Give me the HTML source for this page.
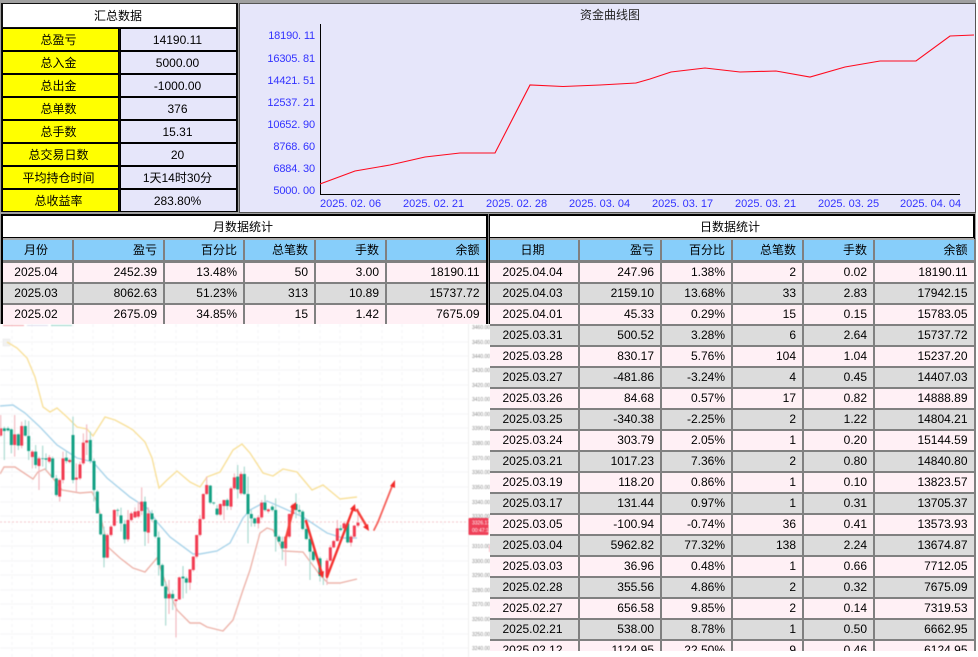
<!DOCTYPE html>
<html lang="zh">
<head>
<meta charset="utf-8">
<title>汇总数据</title>
<style>
html,body{margin:0;padding:0;width:978px;height:657px;overflow:hidden;background:#fff;}
body{font-family:"Liberation Sans","Noto Sans CJK SC",sans-serif;font-size:12px;color:#000;position:relative;}
.a{position:absolute;}
.bgc{left:0;top:0;width:976px;height:651px;background:#a0a0a0;}
.sumbox{left:1px;top:3px;width:237px;height:209px;background:#111;}
.title{position:absolute;background:#fff;text-align:center;box-sizing:border-box;padding-right:3px;}
.y,.v{position:absolute;height:21px;line-height:22px;text-align:center;box-sizing:border-box;}
.y{left:3px;width:115px;background:#ffff00;box-shadow:0 0 0 1px #000;padding-right:4px;}
.v{left:121px;width:115px;background:#e6e6fa;box-shadow:0 0 0 1px #000;padding-right:2px;}
.chart{left:239px;top:3px;width:737px;height:210px;background:#555;}
.chart i{position:absolute;left:1px;top:1px;width:735px;height:208px;background:#e6e6fa;}
.yl{position:absolute;left:250px;width:65px;text-align:right;color:#3232ff;font-size:11px;line-height:14px;height:14px;letter-spacing:-.15px;}
.xl{position:absolute;top:197px;color:#3232ff;font-size:11px;line-height:14px;white-space:nowrap;}
table{position:absolute;border-collapse:separate;border-spacing:2px;table-layout:fixed;background:#808080;}
td,th{padding:0 6px 0 0;height:19px;line-height:19px;font-weight:normal;text-align:right;white-space:nowrap;overflow:hidden;box-sizing:border-box;}
th{background:#87cefa;height:21px;line-height:20px;border-bottom:1px solid #808080;}
td:first-child,th:first-child{text-align:center;padding:0 3px 0 0;}
td:last-child,th:last-child{padding-right:6.5px;}
tr.p td{background:#fff0f5;}
tr.g td{background:#dcdcdc;}
.bk{background:#000;position:absolute;}
</style>
</head>
<body>
<div class="a bgc"></div>

<!-- Summary -->
<div class="a sumbox"></div>
<div class="title" style="left:3px;top:4px;width:233px;height:23px;line-height:24px;">汇总数据</div>
<div class="y" style="top:28.5px">总盈亏</div><div class="v" style="top:28.5px">14190.11</div>
<div class="y" style="top:51.5px">总入金</div><div class="v" style="top:51.5px">5000.00</div>
<div class="y" style="top:74.5px">总出金</div><div class="v" style="top:74.5px">-1000.00</div>
<div class="y" style="top:97.5px">总单数</div><div class="v" style="top:97.5px">376</div>
<div class="y" style="top:120.5px">总手数</div><div class="v" style="top:120.5px">15.31</div>
<div class="y" style="top:143.5px">总交易日数</div><div class="v" style="top:143.5px">20</div>
<div class="y" style="top:166.5px">平均持仓时间</div><div class="v" style="top:166.5px">1天14时30分</div>
<div class="y" style="top:189.5px">总收益率</div><div class="v" style="top:189.5px">283.80%</div>

<!-- Equity chart -->
<div class="a chart"><i></i></div>
<div class="a" style="left:580px;top:8px;width:60px;text-align:center;line-height:15px;white-space:nowrap;color:#222;">资金曲线图</div>
<div class="yl" style="top:29px">18190. 11</div>
<div class="yl" style="top:52px">16305. 81</div>
<div class="yl" style="top:74px">14421. 51</div>
<div class="yl" style="top:96px">12537. 21</div>
<div class="yl" style="top:118px">10652. 90</div>
<div class="yl" style="top:140px">8768. 60</div>
<div class="yl" style="top:162px">6884. 30</div>
<div class="yl" style="top:184px">5000. 00</div>
<div class="xl" style="left:320px">2025. 02. 06</div>
<div class="xl" style="left:403px">2025. 02. 21</div>
<div class="xl" style="left:486px">2025. 02. 28</div>
<div class="xl" style="left:569px">2025. 03. 04</div>
<div class="xl" style="left:652px">2025. 03. 17</div>
<div class="xl" style="left:735px">2025. 03. 21</div>
<div class="xl" style="left:818px">2025. 03. 25</div>
<div class="xl" style="left:900px">2025. 04. 04</div>
<svg class="a" style="left:0;top:0" width="978" height="213" viewBox="0 0 978 213">
<path d="M320.5 24V194.5H960" fill="none" stroke="#000" stroke-width="1"/>
<polyline fill="none" stroke="#ff0a1e" stroke-width="1.1" points="320,184 355,171 390,165 425,157 460,153 495,153 530,85 563,86.5 600,85 636,83 650,79 671,72 705,68 740,72 776,71 810,77 845,67 880,61 916,61 950,36 974,35"/>
</svg>

<!-- Month table -->
<table style="left:1px;top:238px;width:487px;">
<colgroup><col style="width:69px"><col style="width:89px"><col style="width:78px"><col style="width:69px"><col style="width:69px"><col style="width:99px"></colgroup>
<tr><th>月份</th><th>盈亏</th><th>百分比</th><th>总笔数</th><th>手数</th><th>余额</th></tr>
<tr class="p"><td>2025.04</td><td>2452.39</td><td>13.48%</td><td>50</td><td>3.00</td><td>18190.11</td></tr>
<tr class="g"><td>2025.03</td><td>8062.63</td><td>51.23%</td><td>313</td><td>10.89</td><td>15737.72</td></tr>
<tr class="p"><td>2025.02</td><td>2675.09</td><td>34.85%</td><td>15</td><td>1.42</td><td>7675.09</td></tr>
</table>

<!-- Day table -->
<div class="a" style="left:488px;top:238px;width:488px;height:413px;overflow:hidden;">
<table style="left:0;top:0;width:488px;">
<colgroup><col style="width:88px"><col style="width:80px"><col style="width:69px"><col style="width:69px"><col style="width:69px"><col style="width:99px"></colgroup>
<tr><th>日期</th><th>盈亏</th><th>百分比</th><th>总笔数</th><th>手数</th><th>余额</th></tr>
<tr class="p"><td>2025.04.04</td><td>247.96</td><td>1.38%</td><td>2</td><td>0.02</td><td>18190.11</td></tr>
<tr class="g"><td>2025.04.03</td><td>2159.10</td><td>13.68%</td><td>33</td><td>2.83</td><td>17942.15</td></tr>
<tr class="p"><td>2025.04.01</td><td>45.33</td><td>0.29%</td><td>15</td><td>0.15</td><td>15783.05</td></tr>
<tr class="g"><td>2025.03.31</td><td>500.52</td><td>3.28%</td><td>6</td><td>2.64</td><td>15737.72</td></tr>
<tr class="p"><td>2025.03.28</td><td>830.17</td><td>5.76%</td><td>104</td><td>1.04</td><td>15237.20</td></tr>
<tr class="g"><td>2025.03.27</td><td>-481.86</td><td>-3.24%</td><td>4</td><td>0.45</td><td>14407.03</td></tr>
<tr class="p"><td>2025.03.26</td><td>84.68</td><td>0.57%</td><td>17</td><td>0.82</td><td>14888.89</td></tr>
<tr class="g"><td>2025.03.25</td><td>-340.38</td><td>-2.25%</td><td>2</td><td>1.22</td><td>14804.21</td></tr>
<tr class="p"><td>2025.03.24</td><td>303.79</td><td>2.05%</td><td>1</td><td>0.20</td><td>15144.59</td></tr>
<tr class="g"><td>2025.03.21</td><td>1017.23</td><td>7.36%</td><td>2</td><td>0.80</td><td>14840.80</td></tr>
<tr class="p"><td>2025.03.19</td><td>118.20</td><td>0.86%</td><td>1</td><td>0.10</td><td>13823.57</td></tr>
<tr class="g"><td>2025.03.17</td><td>131.44</td><td>0.97%</td><td>1</td><td>0.31</td><td>13705.37</td></tr>
<tr class="p"><td>2025.03.05</td><td>-100.94</td><td>-0.74%</td><td>36</td><td>0.41</td><td>13573.93</td></tr>
<tr class="g"><td>2025.03.04</td><td>5962.82</td><td>77.32%</td><td>138</td><td>2.24</td><td>13674.87</td></tr>
<tr class="p"><td>2025.03.03</td><td>36.96</td><td>0.48%</td><td>1</td><td>0.66</td><td>7712.05</td></tr>
<tr class="g"><td>2025.02.28</td><td>355.56</td><td>4.86%</td><td>2</td><td>0.32</td><td>7675.09</td></tr>
<tr class="p"><td>2025.02.27</td><td>656.58</td><td>9.85%</td><td>2</td><td>0.14</td><td>7319.53</td></tr>
<tr class="g"><td>2025.02.21</td><td>538.00</td><td>8.78%</td><td>1</td><td>0.50</td><td>6662.95</td></tr>
<tr class="p"><td>2025.02.12</td><td>1124.95</td><td>22.50%</td><td>9</td><td>0.46</td><td>6124.95</td></tr>
</table>
</div>

<!-- Black frame for tables (painted above the tables) -->
<div class="bk" style="left:1px;top:213.5px;width:973.5px;height:25px;"></div>
<div class="bk" style="left:1px;top:213.5px;width:2px;height:120px;"></div>
<div class="bk" style="left:486px;top:213.5px;width:4px;height:120px;"></div>
<div class="a" style="left:488px;top:214px;width:1px;height:120px;background:#888;"></div>
<div class="title" style="left:3px;top:216px;width:483px;height:21px;line-height:23px;">月数据统计</div>
<div class="title" style="left:490px;top:216px;width:483px;height:21px;line-height:23px;">日数据统计</div>
<div class="a" style="left:3px;top:238px;width:483px;height:2px;background:#aaa;"></div>
<div class="a" style="left:490px;top:238px;width:484px;height:2px;background:#aaa;"></div>

<!-- Trading chart overlay -->
<div class="a" style="left:0;top:324px;width:490px;height:333px;background:#fff;overflow:hidden;">
<svg width="490" height="333" viewBox="0 324 490 333" style="display:block;filter:blur(.5px)">
<g fill="none" stroke="#f6f6f7" stroke-width="1">
<path d="M0 342H468M0 356H468M0 370H468M0 385H468M0 399H468M0 414H468M0 428H468M0 443H468M0 458H468M0 472H468M0 487H468M0 502H468M0 516H468M0 531H468M0 546H468M0 561H468M0 575H468M0 590H468M0 604H468M0 619H468M0 634H468M0 648H468"/>
<path stroke-dasharray="3 3" d="M12 324V657M32 324V657M52 324V657M73 324V657M93 324V657M113 324V657M135 324V657M155 324V657M176 324V657M197 324V657M217 324V657M237 324V657M258 324V657M279 324V657M299 324V657M320 324V657M340 324V657M361 324V657M382 324V657M402 324V657M423 324V657M443 324V657"/>
</g>
<path d="M468.5 324V657" stroke="#eeeeee" stroke-width="1"/>
<path d="M3 325.5H24" stroke="#f3a6ae" stroke-width="1"/><path d="M27 325.5H48" stroke="#dcdcec" stroke-width="1"/><path d="M51 325.5H72" stroke="#9ad6cb" stroke-width="1"/>
<rect x="3" y="339" width="7" height="7" fill="#f1f1f1" stroke="#e8e8e8" stroke-width=".5"/>
<path d="M0 522H468" stroke="#f2b6bb" stroke-width=".8" stroke-dasharray="2 2"/>
<polyline fill="none" stroke="#f8e09a" stroke-width="1.4" points="7,342 17,348 27,358 35,377 43,407 50,412 57,408 67,417 77,427 87,429 93,436 105,417 115,420 128,427 133,430 145,442 152,458 159,488 167,480 177,471 190,482 200,487 207,477 220,472 233,450 242,444 250,453 263,473 273,476 283,469 297,472 312,490 323,485 340,499 357,497"/>
<polyline fill="none" stroke="#aad4ea" stroke-width="1.4" points="0,406 13,405 25,413 40,427 57,445 77,458 93,462 107,478 130,497 147,508 157,522 170,537 193,554 200,554 217,551 230,543 243,518 250,510 267,501 283,508 303,517 327,533 343,538 357,538"/>
<polyline fill="none" stroke="#edb4ab" stroke-width="1.4" points="0,474 4,467 15,467 33,479 38,472 45,469 52,477 62,490 80,493 92,492 97,502 108,547 120,558 133,568 145,572 157,558 167,587 177,610 190,623 200,623 207,627 223,631 233,620 243,590 250,570 260,533 267,528 273,530 283,551 303,552 320,575 328,583 340,583 357,579"/>

<g transform="translate(0,395) scale(.33333)" fill="none">
<path stroke="#a9d9d0" stroke-width="3.5" d="M13 95V195M24 95V110M34 100V175M55 115V165M76 75V125M86 78V195M107 150V220M128 152V215M138 175V225M158 185V250M169 240V305M199 170V205M219 65V265M271 110V205M282 190V320"/>
<path stroke="#f2b9c0" stroke-width="3.5" d="M2 60V125M44 60V185M65 80V160M97 165V220M117 185V285M148 180V205M179 250V320M189 170V265M209 190V205M229 205V290M240 200V255M250 115V210M260 88V180"/>
<path stroke="#12a083" stroke-width="9" d="M13 100V108M24 100V106M34 103V150M55 118V152M76 93V122M86 123V168M107 170V210M128 190V192M138 190V194M158 190V248M169 250V300M199 188V198M219 120V255M271 135V198M282 198V285"/>
<path stroke="#f23a50" stroke-width="9" d="M2 100V122M44 118V150M65 93V152M97 170V186M117 190V213M148 187V200M179 255V305M189 190V255M209 195V201M229 248V254M240 208V250M250 143V205M260 136V143"/>
</g>
<g transform="translate(0,430) scale(.33333)" fill="none">
<path stroke="#a9d9d0" stroke-width="3.5" d="M292 180V250M302 250V316M312 290V412M353 235V260M363 233V305M374 270V340M435 200V348M456 240V275M466 265V325M476 305V437M487 400V470M497 455V587M518 480V540M549 408V505M559 440V490M631 165V222M641 215V225M651 225V258M682 205V240M713 105V205M733 110V195M744 140V340"/>
<path stroke="#f2b9c0" stroke-width="3.5" d="M322 310V385M333 285V320M343 238V290M384 240V335M394 245V275M405 232V265M415 215V265M425 172V255M445 232V340M507 450V552M528 507V622M538 440V510M570 418V480M580 378V425M590 315V385M600 255V320M610 190V270M620 140V195M661 220V258M672 210V270M693 170V240M703 130V180M723 125V195"/>
<path stroke="#12a083" stroke-width="9" d="M292 185V250M302 252V313M312 313V383M353 240V242M363 256V280M374 282V328M435 215V305M456 250V268M466 270V320M476 322V405M487 405V468M497 470V505M518 492V505M549 440V445M559 445V458M631 167V218M641 218V220M651 236V254M682 210V228M713 140V178M733 132V192M744 192V252"/>
<path stroke="#f23a50" stroke-width="9" d="M322 315V383M333 290V315M343 240V287M384 270V328M394 250V270M405 245V262M415 243V260M425 215V243M445 250V308M507 492V505M528 508V513M538 442V508M570 418V458M580 380V420M590 315V380M600 267V315M610 192V267M620 165V192M661 222V254M672 210V228M693 175V230M703 142V175M723 132V190"/>
</g>
<g transform="translate(240,430) scale(.33333)" fill="none">
<path stroke="#a9d9d0" stroke-width="3.5" d="M34 240V290M44 262V290M75 195V245M97 225V245M107 205V365M117 315V340M127 320V390M168 190V265M178 225V255M188 240V300M199 280V330M210 320V450M220 360V395M240 380V455M250 430V465M302 285V305M323 270V340"/>
<path stroke="#f2b9c0" stroke-width="3.5" d="M55 255V295M65 210V268M85 235V250M137 315V408M148 250V325M158 220V258M261 385V465M271 345V395M281 330V355M292 270V335M312 275V300M333 315V350M343 285V325M354 235V292"/>
<path stroke="#12a083" stroke-width="9" d="M34 252V265M44 265V280M75 218V240M97 230V240M107 240V320M117 320V335M127 335V355M168 222V240M178 240V245M188 245V297M199 297V327M210 327V365M220 365V390M240 385V438M302 295V300M323 280V337"/>
<path stroke="#f23a50" stroke-width="9" d="M55 262V280M65 218V262M85 238V244M137 320V355M148 252V320M158 225V252M261 392V440M271 352V392M281 333V352M292 295V333M312 280V295M333 320V338M343 287V320M354 278V287"/>
</g>

<!-- drawn arrows -->
<g fill="none" stroke-linecap="round">
<path d="M285 542L294 506" stroke="#f7443f" stroke-width="2.4"/>
<path d="M306 521L322 574" stroke="#f5302e" stroke-width="2.4"/>
<path d="M327 577L353 509" stroke="#f5302e" stroke-width="2.4"/>
<path d="M357 510L367 527" stroke="#f5403c" stroke-width="2.4"/>
<path d="M374 530L378 522L393 484" stroke="#f5605a" stroke-width="1.8"/>
</g>
<g fill="#f22a2a">
<polygon points="296,502 296,510 290,507"/>
<polygon points="323,578 318,573 324,571"/>
<polygon points="355,504 356,512 350,509"/>
<polygon points="369,531 363,527 368,524"/>
<polygon points="395,480 395,488 390,486"/>
</g>

<!-- price axis -->
<g font-family="Liberation Sans, sans-serif" font-size="5" fill="#888" text-anchor="start">
<text x="472" y="329">3460.00</text><text x="472" y="344">3450.00</text><text x="472" y="358">3440.00</text><text x="472" y="372">3430.00</text><text x="472" y="387">3420.00</text><text x="472" y="401">3410.00</text><text x="472" y="416">3400.00</text><text x="472" y="430">3390.00</text><text x="472" y="445">3380.00</text><text x="472" y="460">3370.00</text><text x="472" y="474">3360.00</text><text x="472" y="489">3350.00</text><text x="472" y="504">3340.00</text><text x="472" y="518">3330.00</text><text x="472" y="548">3310.00</text><text x="472" y="563">3300.00</text><text x="472" y="577">3290.00</text><text x="472" y="592">3280.00</text><text x="472" y="606">3270.00</text><text x="472" y="621">3260.00</text><text x="472" y="636">3250.00</text><text x="472" y="650">3240.00</text>
</g>
<rect x="468.5" y="518" width="20" height="17" rx="1" fill="#ef4058"/>
<g font-family="Liberation Sans, sans-serif" font-size="5" fill="#fff">
<text x="472" y="524.5">3326.17</text><text x="472" y="532">00:47:10</text>
</g>
<rect x="489" y="545" width="1" height="7" fill="#f7b8c0"/>
</svg>
</div>
</body>
</html>
